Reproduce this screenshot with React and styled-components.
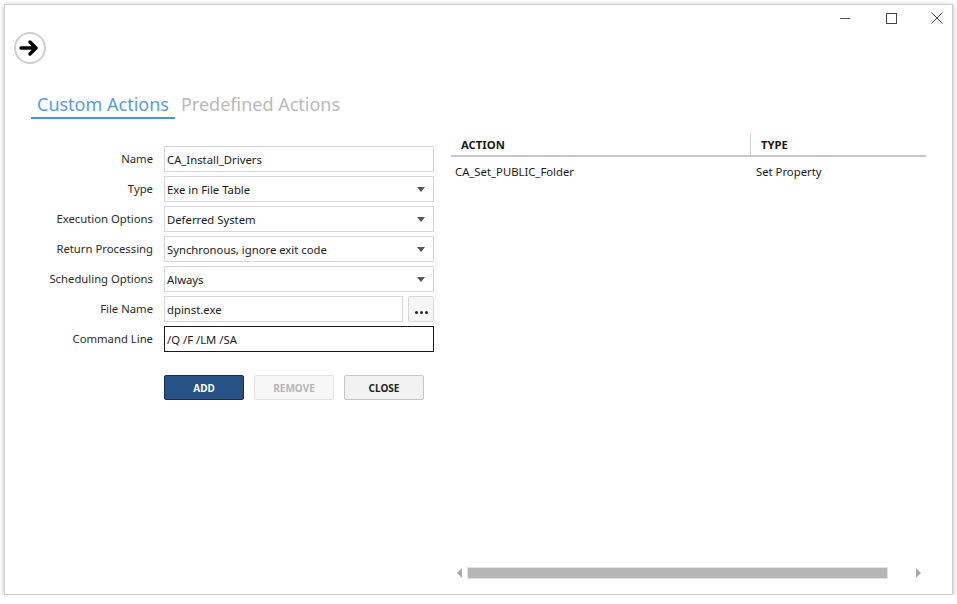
import styled, { createGlobalStyle } from "styled-components";

const GlobalStyle = createGlobalStyle`
  html, body {
    margin: 0;
    padding: 0;
    background: #ffffff;
  }
  body {
    font-family: "Noto Sans", "Open Sans", sans-serif;
    font-size: 11.3px;
    color: #1f1f1f;
  }
  * {
    box-sizing: border-box;
  }
`;

const Window = styled.div`
  margin: 4px 0 0 4px;
  width: 949px;
  height: 591px;
  background: #fff;
  border: 1px solid #cfcfcf;
  box-shadow: 0 1px 5px rgba(0, 0, 0, 0.28);
  display: flex;
  flex-direction: column;
`;

const TitleBar = styled.div`
  height: 26px;
  display: flex;
  justify-content: flex-end;
  align-items: center;
  gap: 16px;
`;

const WinButton = styled.div`
  width: 30px;
  height: 26px;
  display: flex;
  align-items: center;
  justify-content: center;
  color: #333;
`;

const BackButton = styled.div`
  margin: 1px 0 0 9px;
  width: 32px;
  height: 32px;
  border: 2px solid #d0d0d0;
  border-radius: 50%;
  display: flex;
  align-items: center;
  justify-content: center;
`;

const Tabs = styled.div`
  margin: 28px 0 0 26px;
  display: flex;
`;

const Tab = styled.div`
  padding: 0 6px;
  font-size: 18px;
  line-height: 25px;
  color: ${(p) => (p.active ? "#5b9be0" : "#b9b9b9")};
  border-bottom: 2px solid ${(p) => (p.active ? "#4a90e2" : "transparent")};
`;

const Content = styled.div`
  flex: 1;
  display: flex;
  min-height: 0;
`;

const Form = styled.div`
  padding-top: 27px;
  display: grid;
  grid-template-columns: 148px 270px;
  column-gap: 11px;
  row-gap: 4px;
  align-content: start;
`;

const Label = styled.div`
  height: 26px;
  line-height: 26px;
  text-align: right;
  color: #2b2b2b;
`;

const Field = styled.div`
  height: 26px;
  border: 1px solid ${(p) => (p.focused ? "#1a1a1a" : "#d6d6d6")};
  padding: 0 8px 0 2px;
  display: flex;
  align-items: center;
  justify-content: space-between;
  color: #1a1a1a;
  background: #fff;
`;

const FieldRow = styled.div`
  display: flex;
  gap: 5px;
  & > ${Field} {
    flex: 1;
  }
`;

const Caret = styled.span`
  width: 0;
  height: 0;
  border-left: 4px solid transparent;
  border-right: 4px solid transparent;
  border-top: 5px solid #555;
`;

const BrowseButton = styled.div`
  width: 26px;
  height: 26px;
  border: 1px solid #d6d6d6;
  border-radius: 2px;
  background: #f6f6f6;
  display: flex;
  align-items: flex-end;
  justify-content: center;
  padding-bottom: 7px;
  gap: 2px;
`;

const Dot = styled.span`
  width: 3px;
  height: 3px;
  border-radius: 50%;
  background: #222;
`;

const Buttons = styled.div`
  grid-column: 2;
  margin-top: 19px;
  display: flex;
  gap: 10px;
`;

const Button = styled.div`
  width: 80px;
  height: 25px;
  border-radius: 2px;
  display: flex;
  align-items: center;
  justify-content: center;
  font-size: 10px;
  font-weight: 700;
  border: 1px solid
    ${(p) => (p.primary ? "#1c2d44" : p.disabled ? "#e2e2e2" : "#c6c6c6")};
  background: ${(p) =>
    p.primary ? "#275286" : p.disabled ? "#f7f7f7" : "#f2f2f2"};
  color: ${(p) => (p.primary ? "#fff" : p.disabled ? "#b5b5b5" : "#222")};
`;

const TablePanel = styled.div`
  margin-left: 17px;
  width: 475px;
  padding: 15px 0 15px;
  display: flex;
  flex-direction: column;
`;

const Table = styled.div`
  flex: 1;
`;

const HeaderRow = styled.div`
  display: grid;
  grid-template-columns: 299px 1fr;
  height: 23px;
  border-bottom: 2px solid #c8c8c8;
`;

const HeaderCell = styled.div`
  padding: 0 10px;
  line-height: 21px;
  font-weight: 700;
  color: #1a1a1a;
  border-left: ${(p) => (p.divider ? "1px solid #cfcfcf" : "none")};
`;

const Row = styled.div`
  display: grid;
  grid-template-columns: 299px 1fr;
  height: 28px;
  align-items: center;
`;

const Cell = styled.div`
  padding: 0 4px;
  padding-left: ${(p) => (p.second ? "6px" : "4px")};
  color: #1a1a1a;
`;

const Scrollbar = styled.div`
  height: 12px;
  display: flex;
  align-items: center;
`;

const ScrollArrow = styled.div`
  width: 16px;
  height: 12px;
  display: flex;
  align-items: center;
  justify-content: center;
`;

const ScrollTrack = styled.div`
  flex: 1;
  height: 12px;
  padding-right: 22px;
  display: flex;
`;

const Thumb = styled.div`
  flex: 1;
  background: #b6b6b6;
  border: 1px solid #e2e2e2;
`;

const Triangle = styled.span`
  width: 0;
  height: 0;
  border-top: 5px solid transparent;
  border-bottom: 5px solid transparent;
  ${(p) =>
    p.dir === "left"
      ? "border-right: 5px solid #a8a8a8;"
      : "border-left: 5px solid #a8a8a8;"}
`;

const selects = [
  ["Type", "Exe in File Table"],
  ["Execution Options", "Deferred System"],
  ["Return Processing", "Synchronous, ignore exit code"],
  ["Scheduling Options", "Always"],
];

export default function App() {
  return (
    <>
      <GlobalStyle />
      <Window>
        <TitleBar>
          <WinButton>
            <svg width="10" height="10" viewBox="0 0 10 10">
              <path d="M0 5.5H10" stroke="#555" strokeWidth="1" />
            </svg>
          </WinButton>
          <WinButton>
            <svg width="11" height="11" viewBox="0 0 11 11">
              <rect x="0.5" y="0.5" width="10" height="10" fill="none" stroke="#444" strokeWidth="1" />
            </svg>
          </WinButton>
          <WinButton>
            <svg width="12" height="12" viewBox="0 0 12 12">
              <path d="M0.5 0.5L11.5 11.5M11.5 0.5L0.5 11.5" stroke="#444" strokeWidth="1" />
            </svg>
          </WinButton>
        </TitleBar>

        <BackButton>
          <svg width="22" height="16" viewBox="0 0 22 16">
            <path
              d="M2 8H17M11 2L17 8L11 14"
              fill="none"
              stroke="#000"
              strokeWidth="3.4"
              strokeLinecap="round"
              strokeLinejoin="round"
            />
          </svg>
        </BackButton>

        <Tabs>
          <Tab active>Custom Actions</Tab>
          <Tab>Predefined Actions</Tab>
        </Tabs>

        <Content>
          <Form>
            <Label>Name</Label>
            <Field>CA_Install_Drivers</Field>

            {selects.map(([label, value]) => (
              <>
                <Label key={label}>{label}</Label>
                <Field key={label + "-f"}>
                  {value}
                  <Caret />
                </Field>
              </>
            ))}

            <Label>File Name</Label>
            <FieldRow>
              <Field>dpinst.exe</Field>
              <BrowseButton>
                <Dot />
                <Dot />
                <Dot />
              </BrowseButton>
            </FieldRow>

            <Label>Command Line</Label>
            <Field focused>/Q /F /LM /SA</Field>

            <Buttons>
              <Button primary>ADD</Button>
              <Button disabled>REMOVE</Button>
              <Button>CLOSE</Button>
            </Buttons>
          </Form>

          <TablePanel>
            <Table>
              <HeaderRow>
                <HeaderCell>ACTION</HeaderCell>
                <HeaderCell divider>TYPE</HeaderCell>
              </HeaderRow>
              <Row>
                <Cell>CA_Set_PUBLIC_Folder</Cell>
                <Cell second>Set Property</Cell>
              </Row>
            </Table>
            <Scrollbar>
              <ScrollArrow>
                <Triangle dir="left" />
              </ScrollArrow>
              <ScrollTrack>
                <Thumb />
              </ScrollTrack>
              <ScrollArrow>
                <Triangle dir="right" />
              </ScrollArrow>
            </Scrollbar>
          </TablePanel>
        </Content>
      </Window>
    </>
  );
}
